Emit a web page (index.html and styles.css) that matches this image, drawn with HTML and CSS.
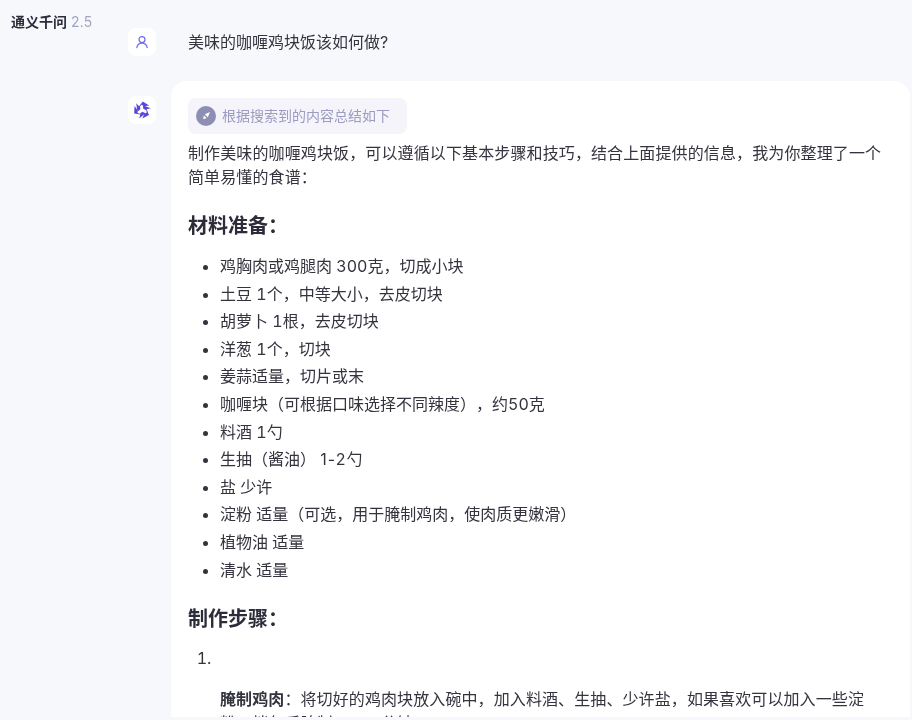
FILE: index.html
```html
<!DOCTYPE html>
<html lang="zh">
<head>
<meta charset="utf-8">
<title>通义千问 2.5</title>
<link rel="stylesheet" href="styles.css">
</head>
<body>
<div class="app">
  <aside class="side"><span class="brand">通义千问</span> <span class="ver">2.5</span></aside>
  <main class="chat">
    <section class="row-user">
      <div class="avatar">
        <svg width="14" height="14" viewBox="0 0 14 14" fill="none" stroke="#6f6ae8" stroke-width="1.2" stroke-linecap="round"><circle cx="7" cy="4.6" r="3"/><path d="M1.8 12.6c.6-2.8 2.6-4.4 5.2-4.4s4.6 1.6 5.2 4.4"/></svg>
      </div>
      <p class="question">美味的咖喱鸡块饭该如何做?</p>
    </section>
    <section class="row-bot">
      <div class="avatar">
        <svg width="20" height="20" viewBox="0 0 24 24" fill="#5a46dd">
          <path d="M5 4 8.4 7.6 13 1.8 20.6 6.6 14.4 7.4 11.6 5.6 9.6 7.4 10 11.4 6.6 13.8z"/>
          <path d="M5 4 8.4 7.6 13 1.8 20.6 6.6 14.4 7.4 11.6 5.6 9.6 7.4 10 11.4 6.6 13.8z" transform="rotate(120 12 12)"/>
          <path d="M5 4 8.4 7.6 13 1.8 20.6 6.6 14.4 7.4 11.6 5.6 9.6 7.4 10 11.4 6.6 13.8z" transform="rotate(240 12 12)"/>
        </svg>
      </div>
      <article class="card">
        <div class="pill">
          <span class="pill-icon"><svg width="10" height="10" viewBox="0 0 10 10" fill="#fff"><path d="M9 1 6.8 6.2 3.8 3.2z"/><path d="M3 4.4 5.6 7 3 8 2 7.4z"/></svg></span>
          <span>根据搜索到的内容总结如下</span>
        </div>
        <p class="intro">制作美味的咖喱鸡块饭，可以遵循以下基本步骤和技巧，结合上面提供的信息，我为你整理了一个简单易懂的食谱：</p>
        <h3>材料准备：</h3>
        <ul>
          <li>鸡胸肉或鸡腿肉 300克，切成小块</li>
          <li>土豆 1个，中等大小，去皮切块</li>
          <li>胡萝卜 1根，去皮切块</li>
          <li>洋葱 1个，切块</li>
          <li>姜蒜适量，切片或末</li>
          <li>咖喱块（可根据口味选择不同辣度），约50克</li>
          <li>料酒 1勺</li>
          <li>生抽（酱油） <span class="range">1-2</span>勺</li>
          <li>盐 少许</li>
          <li>淀粉 适量（可选，用于腌制鸡肉，使肉质更嫩滑）</li>
          <li>植物油 适量</li>
          <li>清水 适量</li>
        </ul>
        <h3 class="steps">制作步骤：</h3>
        <ol>
          <li><br><p><strong>腌制鸡肉</strong>：将切好的鸡肉块放入碗中，加入料酒、生抽、少许盐，如果喜欢可以加入一些淀粉，拌匀后腌制<span class="range">10-20</span>分钟。</p></li>
        </ol>
      </article>
    </section>
  </main>
</div>
</body>
</html>
```
FILE: styles.css
```css
html, body { margin: 0; padding: 0; height: 720px; overflow: hidden; background: #f7f8fc; }
body { font-family: Inter, "Noto Sans CJK SC", sans-serif; color: #26244c; font-size: 16px; font-variant-numeric: tabular-nums; text-spacing-trim: space-all; }
.app { display: flex; height: 717px; overflow: hidden; filter: blur(0.3px); }
.side { width: 128px; flex: none; box-sizing: border-box; padding: 12px 0 0 11px; font-size: 14px; line-height: 20px; white-space: nowrap; }
.brand { font-weight: 600; color: #2c2c3a; }
.ver { color: #a3a5c0; }
.chat { flex: 1; min-width: 0; padding-right: 2px; }
.avatar { width: 28px; height: 28px; flex: none; background: #fff; border-radius: 8px; display: flex; align-items: center; justify-content: center; }
.row-user { display: flex; margin-top: 28px; height: 53px; }
.question { margin: 0 0 0 32px; line-height: 28px; color: #34343f; }
.row-bot { display: flex; gap: 15px; }
.row-bot > .avatar { margin-top: 15px; }
.card { flex: 1; background: #fff; border-radius: 16px 16px 0 0; padding: 17px 22px 0 17px; color: #34343f; line-height: 24px; }
.pill { display: inline-flex; align-items: center; gap: 6px; height: 36px; padding: 0 17px 0 8px; background: #f4f4fa; border-radius: 8px; color: #9b9cc0; font-size: 14px; }
.pill-icon { width: 20px; height: 20px; border-radius: 50%; background: #8d8eb4; display: flex; align-items: center; justify-content: center; }
.intro { margin: 7px 0 0; line-height: 24px; letter-spacing: 0.12px; }
h3 { margin: 22px 0 0; font-size: 20px; line-height: 30px; font-weight: 600; color: #2c2c3a; }
ul, ol { margin: 12px 0 0; padding: 0 0 0 32px; }
li { line-height: 27.6px; }
h3.steps { margin-top: 20px; }
ol { margin-top: 11px; }
ol li::marker { content: counter(list-item) ".\00a0\00a0"; }
ol p { margin: 14px 0 0; line-height: 24px; letter-spacing: 0.1px; }
strong { font-weight: 600; }
.range { font-variant-numeric: normal; letter-spacing: 1px; }
```
